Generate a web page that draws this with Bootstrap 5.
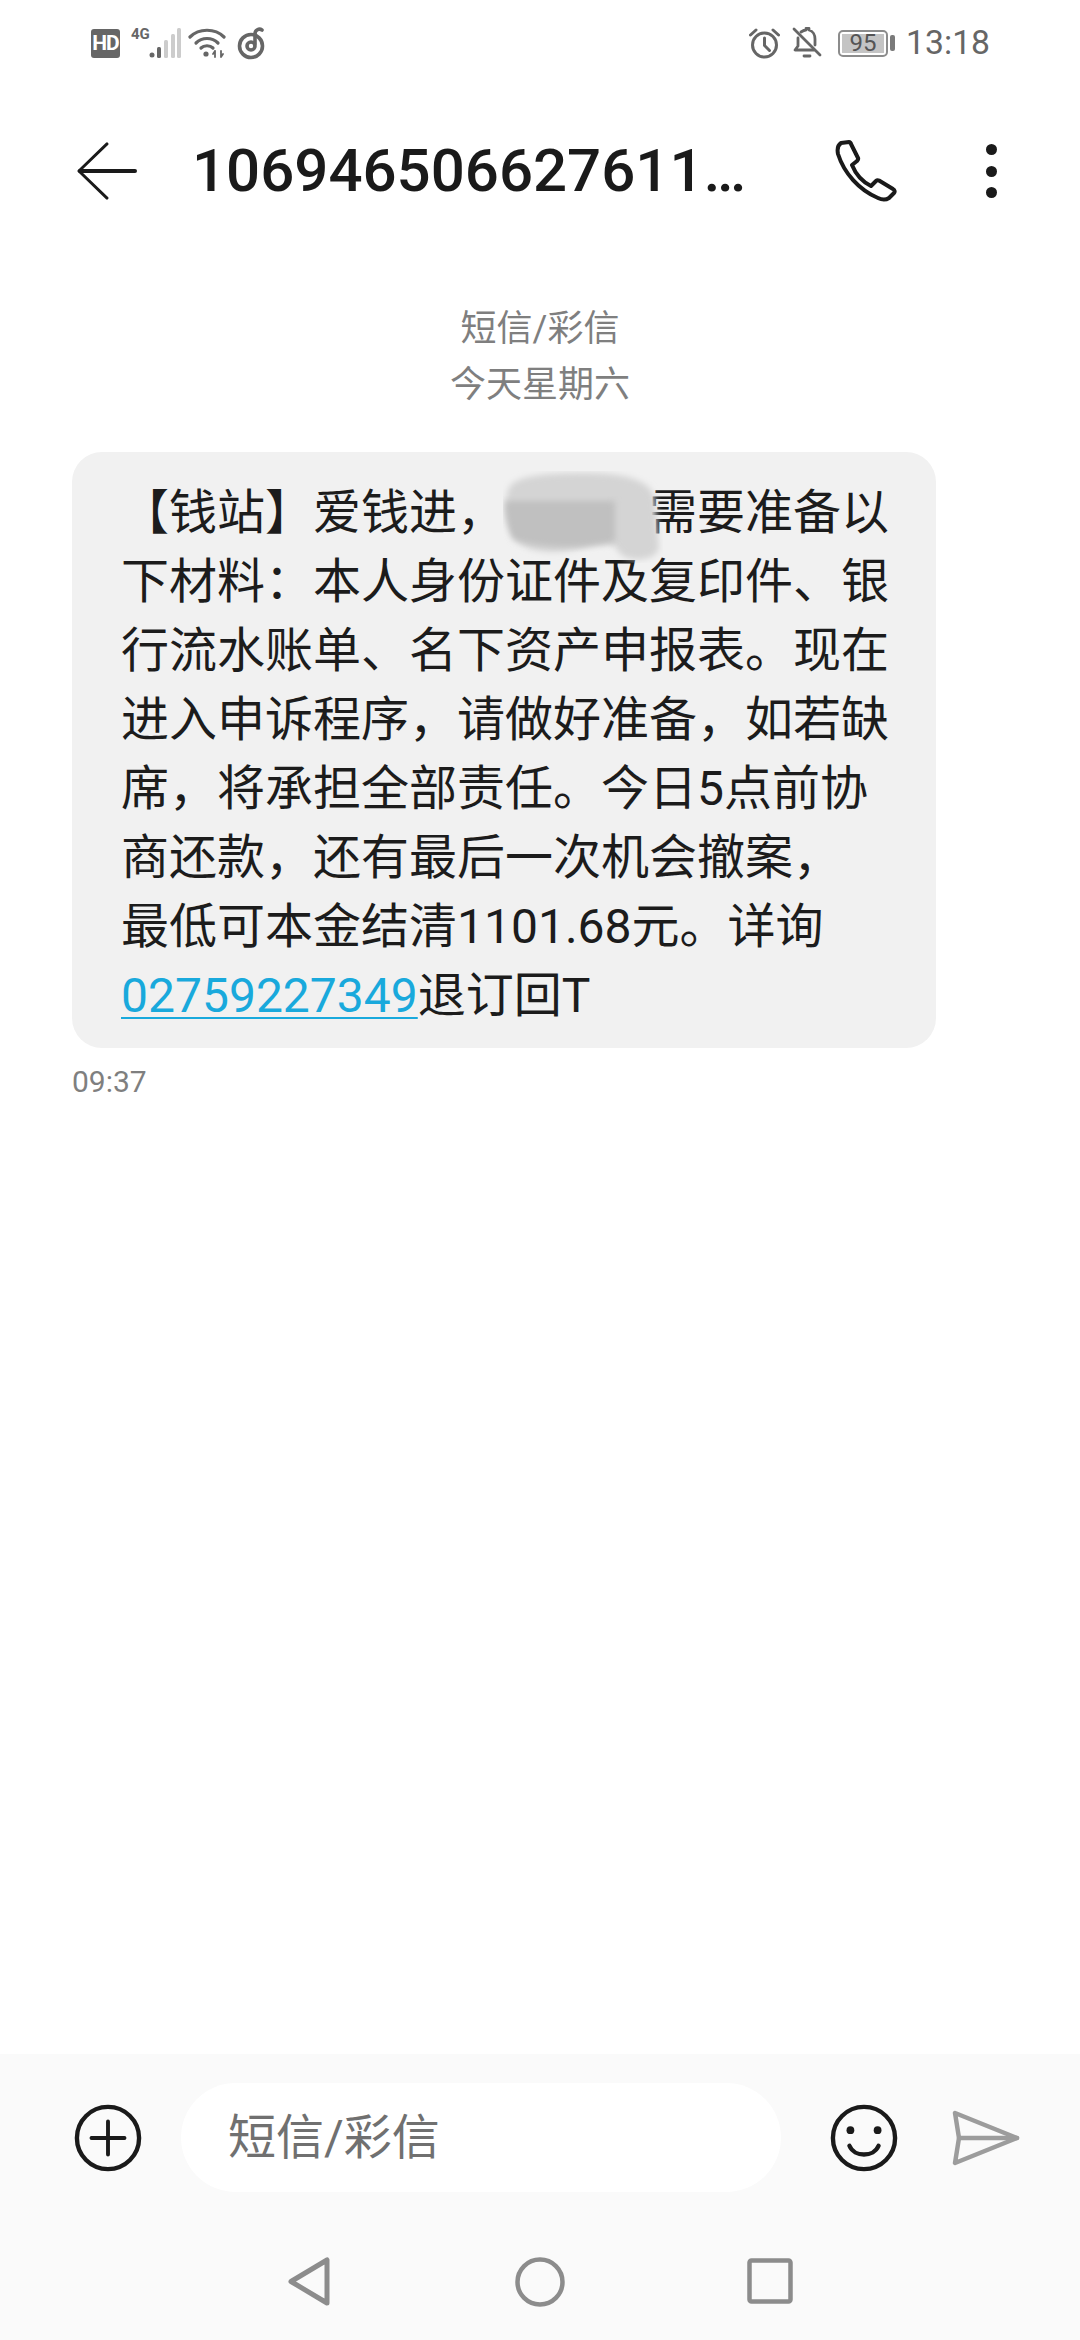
<!DOCTYPE html>
<html lang="zh-CN">
<head>
    <meta charset="UTF-8">
    <meta name="viewport" content="width=device-width, initial-scale=1.0">
    <title>短信</title>
    <link href="https://cdn.jsdelivr.net/npm/bootstrap@5.3.0/dist/css/bootstrap.min.css" rel="stylesheet">
    <style>
        html, body { margin: 0; background: #fff; }
        body { font-family: Roboto, "Noto Sans CJK SC", sans-serif; }
        .phone-page { width: 1080px; height: 2340px; overflow: hidden; }

        /* status bar */
        .status-row { height: 86px; padding: 0 90px 0 91px; color: #666; }
        .hd-tag { width: 29px; height: 29px; border-radius: 3px; background: #666; color: #fff; font: 700 21px/29px Roboto, sans-serif; text-align: center; letter-spacing: -1px; }
        .net-tag { font: 700 15px/15px Roboto, sans-serif; color: #666; margin: -17px -1px 0 11px; width: 17px; white-space: nowrap; }
        .batt-box { width: 50px; height: 27px; border: 2px solid #8c8c8c; border-radius: 5px; padding: 2px; }
        .batt-fill { height: 100%; width: 100%; background: #c4c4c4; font: 400 24px/19px Roboto, sans-serif; color: #555; text-align: center; }
        .batt-nub { width: 5px; height: 16px; background: #7a7a7a; border-radius: 2px; margin-left: 2px; }
        .clock-text { font: 400 33.7px/1 Roboto, sans-serif; color: #666; margin-left: 11px; }

        /* toolbar */
        .tool-row { height: 170px; padding: 0 0 0 77px; }
        .tool-title { font: 500 60px/1 Roboto, sans-serif; color: #1a1a1a; margin-left: 55px; width: 644px; white-space: nowrap; }
        .dot-col { gap: 10.5px; margin-left: 89px; }
        .dot-one { width: 11px; height: 11px; border-radius: 50%; background: #1a1a1a; }

        /* conversation */
        .chat-area { padding: 45px 0 0 72px; }
        .date-block { width: 936px; text-align: center; color: #7f7f7f; font-size: 36px; line-height: 56px; }
        .msg-bubble { width: 864px; margin-top: 39px; padding: 26px 0 18px 49px; background: #f1f1f1; border-radius: 30px; font-size: 48px; line-height: 69px; color: #1c1c1c; white-space: nowrap; }
        .blur-slot { display: inline-block; width: 3em; height: 1em; position: relative; }
        .blur-slot svg { position: absolute; left: -2px; top: -10px; }
        .msg-link { color: #19a9dc; text-decoration: underline; text-decoration-thickness: 2px; text-underline-offset: 5px; }
        .msg-time { font-size: 30px; line-height: 34px; color: #7f7f7f; margin-top: 17px; }

        /* bottom */
        .compose-area { height: 286px; background: #fafafa; }
        .compose-row { height: 167px; padding-left: 74px; }
        .input-pill { width: 600px; height: 109px; margin-left: 39px; border-radius: 55px; background: #fff; padding-left: 47px; font-size: 48px; line-height: 109px; color: #707070; }
        .soft-keys { height: 119px; gap: 0; }
    </style>
</head>
<body>
<div class="phone-page d-flex flex-column">
    <!-- Status bar -->
    <div class="status-row d-flex align-items-center flex-shrink-0">
        <div class="hd-tag">HD</div>
        <div class="net-tag">4G</div>
        <svg width="32" height="30" viewBox="0 0 32 30" style="margin-left:2px"><circle cx="3" cy="27" r="2.5" fill="#666"/><rect x="8" y="19" width="4" height="11" rx="1.5" fill="#666"/><rect x="15" y="12" width="4" height="18" rx="1.5" fill="#ccc"/><rect x="22" y="6" width="4" height="24" rx="1.5" fill="#ccc"/><rect x="28" y="0" width="4" height="30" rx="1.5" fill="#ccc"/></svg>
        <svg width="38" height="30" viewBox="0 0 38 30" style="margin-left:7px" fill="none" stroke="#666" stroke-width="3.2" stroke-linecap="round"><path d="M2 9C11 0 27 0 36 9"/><path d="M8 15C14 9 24 9 30 15"/><path d="M13 20C16 17 22 17 25 20"/><circle cx="18" cy="26" r="2.6" fill="#666" stroke="none"/><path d="M27 29V23M27 23l-2 3M33 23v6M33 29l2-3" stroke-width="1.8"/></svg>
        <svg width="28" height="33" viewBox="0 0 28 33" style="margin-left:11px" fill="none" stroke="#666" stroke-width="3.6" stroke-linecap="round"><circle cx="14" cy="19" r="11.5"/><circle cx="14" cy="19" r="4"/><path d="M18 17V7C18 3 22 1 25 3"/></svg>
        <div class="flex-grow-1"></div>
        <svg width="31" height="31" viewBox="0 0 31 31" fill="none" stroke="#666" stroke-width="3" stroke-linecap="round"><circle cx="15.5" cy="17" r="12"/><path d="M15.5 10v7.5l5 5M1.5 7L7 2M29.5 7L24 2"/></svg>
        <svg width="30" height="32" viewBox="0 0 30 32" style="margin-left:12px" fill="none" stroke="#666" stroke-width="2.8" stroke-linecap="round" stroke-linejoin="round"><path d="M9 5C12 3 13 3 14 3V1.5h3V3c4 1 6 5 6 9v6"/><path d="M6 11v8l-3 4h19"/><path d="M12 29h6"/><path d="M2 2L28 28"/></svg>
        <div class="batt-box" style="margin-left:16px"><div class="batt-fill">95</div></div>
        <div class="batt-nub"></div>
        <div class="clock-text">13:18</div>
    </div>

    <!-- Toolbar -->
    <div class="tool-row d-flex align-items-center flex-shrink-0">
        <svg width="60" height="60" viewBox="0 0 62 60" fill="none" stroke="#1a1a1a" stroke-linecap="round" stroke-linejoin="round"><path d="M31 2L2 30L31 58" stroke-width="3"/><path d="M3 30H60" stroke-width="4"/></svg>
        <div class="tool-title">106946506627611…</div>
        <svg width="62" height="62" viewBox="0 0 62 62" fill="none" stroke="#1a1a1a" stroke-width="4" stroke-linejoin="round" style="margin-left:-1px"><path d="M6 3L14 2C15 2 16 3 16 4L23 18C23.5 19 23 20 22 21L17 25C21 35 28 42 36 46L41 41C42 40 43 40 44 40.500L58 49C60 50 60 52 59 53L54 58C51 60 47 60 43 58C24 50 9 33 3 14C2 9 3 5 6 3Z"/></svg>
        <div class="dot-col d-flex flex-column"><div class="dot-one"></div><div class="dot-one"></div><div class="dot-one"></div></div>
    </div>

    <!-- Conversation -->
    <div class="chat-area flex-grow-1">
        <div class="date-block">短信/彩信<br>今天星期六</div>
        <div class="msg-bubble">【钱站】爱钱进，<span class="blur-slot"><svg width="160" height="92" viewBox="0 0 160 92"><defs><filter id="smudge" x="-10%" y="-10%" width="120%" height="120%"><feGaussianBlur stdDeviation="3"/></filter></defs><path d="M8 14C20 2 60 2 90 2C125 3 150 10 152 30L156 78C150 92 120 92 114 78C112 74 105 72 90 74C60 84 25 84 12 68C2 50 0 25 8 14Z" fill="#d4d4d4" filter="url(#smudge)"/><path d="M2 30H112V70C85 78 35 78 10 68C4 56 2 42 2 30Z" fill="#c0c0c0" filter="url(#smudge)"/></svg></span>需要准备以<br>下材料：本人身份证件及复印件、银<br>行流水账单、名下资产申报表。现在<br>进入申诉程序，请做好准备，如若缺<br>席，将承担全部责任。今日5点前协<br>商还款，还有最后一次机会撤案，<br>最低可本金结清1101.68元。详询<br><a href="#" class="msg-link">02759227349</a>退订回T</div>
        <div class="msg-time">09:37</div>
    </div>

    <!-- Compose + soft keys -->
    <div class="compose-area flex-shrink-0">
        <div class="compose-row d-flex align-items-center">
            <svg width="68" height="68" viewBox="0 0 70 70" fill="none" stroke="#1a1a1a" stroke-linecap="round"><circle cx="35" cy="35" r="32" stroke-width="4.500"/><path d="M18 35H52M35 18V52" stroke-width="4"/></svg>
            <div class="input-pill">短信/彩信</div>
            <svg width="68" height="68" viewBox="0 0 70 70" fill="none" stroke="#1a1a1a" stroke-linecap="round" style="margin-left:49px"><circle cx="35" cy="35" r="32" stroke-width="4.500"/><circle cx="21" cy="27" r="4" fill="#1a1a1a" stroke="none"/><circle cx="49" cy="27" r="4" fill="#1a1a1a" stroke="none"/><path d="M20 43C25 55 45 55 50 43" stroke-width="4.500"/></svg>
            <svg width="68" height="56" viewBox="0 0 68 56" fill="none" stroke="#9c9c9c" stroke-width="4.500" stroke-linecap="round" stroke-linejoin="round" style="margin-left:54px"><path d="M3 3L65 28L3 53L7 28Z"/><path d="M7 28H65"/></svg>
        </div>
        <div class="soft-keys d-flex align-items-start" style="padding:36px 0 0 288px">
            <svg width="42" height="49" viewBox="0 0 42 49" fill="none" stroke="#8c8c8c" stroke-width="5" stroke-linejoin="round"><path d="M39 3V46L3 24.500Z"/></svg>
            <svg width="50" height="50" viewBox="0 0 50 50" fill="none" stroke="#8c8c8c" stroke-width="4.500" style="margin-left:185px"><circle cx="25" cy="25" r="22.500"/></svg>
            <svg width="46" height="46" viewBox="0 0 46 46" fill="none" stroke="#8c8c8c" stroke-width="4.500" stroke-linejoin="round" style="margin-left:182px;margin-top:1px"><rect x="2.500" y="2.500" width="41" height="41" rx="2"/></svg>
        </div>
    </div>
</div>
<script src="https://cdn.jsdelivr.net/npm/bootstrap@5.3.0/dist/js/bootstrap.bundle.min.js"></script>
</body>
</html>
